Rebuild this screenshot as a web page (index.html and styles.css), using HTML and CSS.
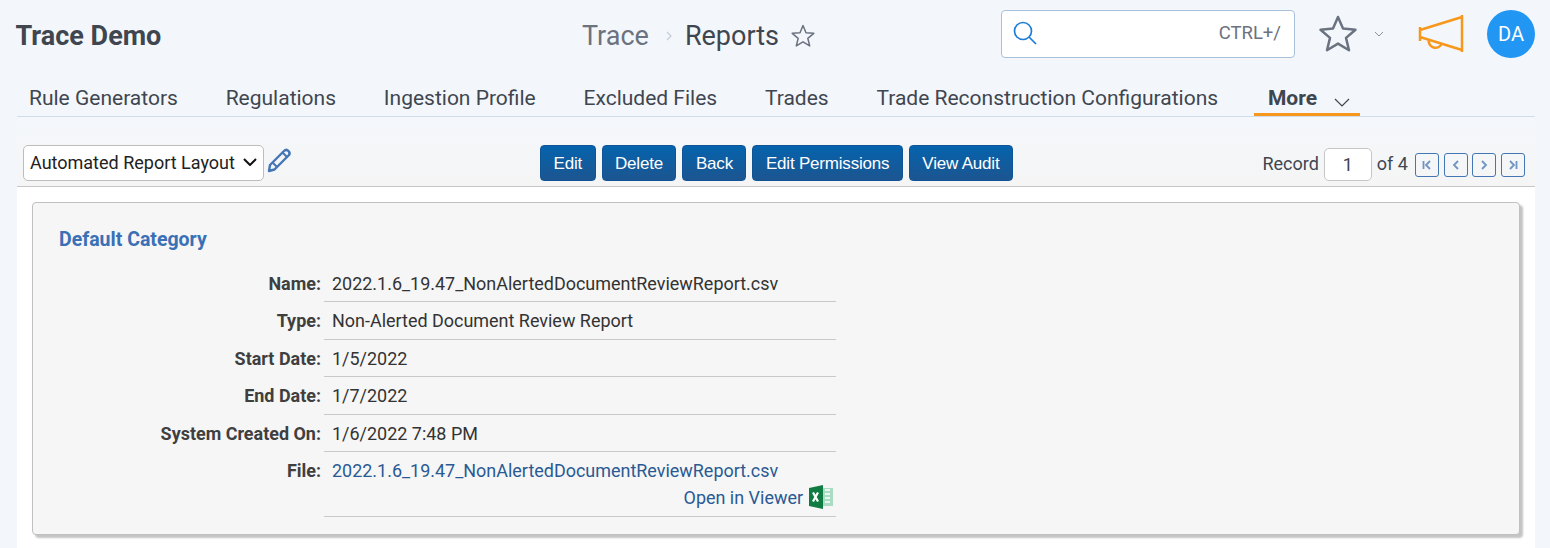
FILE: index.html
```html
<!DOCTYPE html>
<html lang="en">
<head>
    <meta charset="UTF-8">
    <title>Reports</title>
    <link rel="stylesheet" href="styles.css">
</head>
<body>

<header class="topbar">
    <div class="app-title">Trace Demo</div>
    <div class="crumbs">
        <span class="crumb-parent">Trace</span>
        <svg class="crumb-sep" width="8" height="10" viewBox="0 0 8 10"><path d="M2 1l4 4-4 4" fill="none" stroke="#c3ccd8" stroke-width="1.2"/></svg>
        <span class="crumb-current">Reports</span>
        <svg class="crumb-star" width="26" height="26" viewBox="0 0 26 26"><path d="M13 2.5l3 7.2 7.8.6-6 5 1.9 7.6-6.700-4.100-6.700 4.100 1.900-7.600-6-5 7.800-.6z" fill="none" stroke="#6b7280" stroke-width="1.500" stroke-linejoin="round"/></svg>
    </div>
    <div class="top-tools">
        <div class="search">
            <svg width="26" height="26" viewBox="0 0 26 26"><circle cx="11" cy="11" r="8.500" fill="none" stroke="#1c7ed6" stroke-width="1.700"/><path d="M17 17l7 7" stroke="#1c7ed6" stroke-width="1.700"/></svg>
            <span class="search-hint">CTRL+/</span>
        </div>
        <svg class="fav-star" width="40" height="40" viewBox="0 0 40 40"><path d="M20 3l5 11.500 12.500 1.200-9.500 8.200 3 12.300-11-6.600-11 6.600 3-12.300-9.500-8.200 12.500-1.200z" fill="none" stroke="#6b7280" stroke-width="2.500" stroke-linejoin="round"/></svg>
        <svg class="fav-caret" width="10" height="6" viewBox="0 0 10 6"><path d="M1 1l4 4 4-4" fill="none" stroke="#8a929c" stroke-width="1"/></svg>
        <svg class="horn" width="46" height="38" viewBox="0 0 46 38"><path d="M2 12v14M2 15L44 2M2 22l42 13M44 0v37" fill="none" stroke="#f7981d" stroke-width="2.500"/><path d="M11 24a6.800 6.800 0 0 0 13 4" fill="none" stroke="#f7981d" stroke-width="2.500"/></svg>
        <div class="avatar">DA</div>
    </div>
</header>

<nav class="tabs">
    <a class="tab">Rule Generators</a>
    <a class="tab">Regulations</a>
    <a class="tab">Ingestion Profile</a>
    <a class="tab">Excluded Files</a>
    <a class="tab">Trades</a>
    <a class="tab">Trade Reconstruction Configurations</a>
    <a class="tab tab-more">More
        <svg width="16" height="9" viewBox="0 0 16 9"><path d="M1 1l7 7 7-7" fill="none" stroke="#3f4650" stroke-width="1.200"/></svg>
    </a>
</nav>

<main class="panel">
    <div class="toolbar">
        <div class="layout-pick">
            <div class="select">
                <span>Automated Report Layout</span>
                <svg width="14" height="8" viewBox="0 0 14 8"><path d="M1 1l6 6 6-6" fill="none" stroke="#111" stroke-width="2"/></svg>
            </div>
            <svg class="pencil" width="26" height="26" viewBox="0 0 26 26"><path d="M3 18L17 4c1.500-1.500 3-1.500 4.500 0s1.500 3 0 4.500L7.500 22.500 2 24z" fill="none" stroke="#4476b4" stroke-width="2.400" stroke-linejoin="round"/><path d="M15.500 5.500l5 5M6 16l4 4" stroke="#4476b4" stroke-width="2"/></svg>
        </div>
        <div class="actions">
            <button class="btn">Edit</button>
            <button class="btn">Delete</button>
            <button class="btn">Back</button>
            <button class="btn">Edit Permissions</button>
            <button class="btn">View Audit</button>
        </div>
        <div class="pager">
            <span>Record</span>
            <span class="page-num">1</span>
            <span>of 4</span>
            <div class="pager-btns">
                <a class="page-btn"><svg width="12" height="10" viewBox="0 0 12 10"><path d="M2.500 1v8M9 1L5 5l4 4" fill="none" stroke="#6f95c2" stroke-width="1.800"/></svg></a>
                <a class="page-btn"><svg width="12" height="10" viewBox="0 0 12 10"><path d="M8 1L4 5l4 4" fill="none" stroke="#6f95c2" stroke-width="1.800"/></svg></a>
                <a class="page-btn"><svg width="12" height="10" viewBox="0 0 12 10"><path d="M4 1l4 4-4 4" fill="none" stroke="#6f95c2" stroke-width="1.800"/></svg></a>
                <a class="page-btn"><svg width="12" height="10" viewBox="0 0 12 10"><path d="M9.500 1v8M3 1l4 4-4 4" fill="none" stroke="#6f95c2" stroke-width="1.800"/></svg></a>
            </div>
        </div>
    </div>

    <div class="detail">
        <section class="card">
            <h2 class="card-title">Default Category</h2>
            <dl class="fields">
                <div class="field"><dt>Name:</dt><dd>2022.1.6_19.47_NonAlertedDocumentReviewReport.csv</dd></div>
                <div class="field"><dt>Type:</dt><dd>Non-Alerted Document Review Report</dd></div>
                <div class="field"><dt>Start Date:</dt><dd>1/5/2022</dd></div>
                <div class="field"><dt>End Date:</dt><dd>1/7/2022</dd></div>
                <div class="field"><dt>System Created On:</dt><dd>1/6/2022 7:48 PM</dd></div>
                <div class="field field-file">
                    <dt>File:</dt>
                    <dd>
                        <a class="file-link">2022.1.6_19.47_NonAlertedDocumentReviewReport.csv</a>
                        <div class="viewer-row">
                            <a class="file-link">Open in Viewer</a>
                            <svg width="25" height="24" viewBox="0 0 25 24"><rect x="11" y="3" width="13" height="18" fill="#a9dcc3"/><path d="M16 5h5M16 9h5M16 13h5M16 17h5" stroke="#ffffff" stroke-width="1.500"/><path d="M0 3l14-3v24L0 21z" fill="#107c41"/><path d="M4 7.500l5 9M9 7.500l-5 9" stroke="#ffffff" stroke-width="2.200"/></svg>
                        </div>
                    </dd>
                </div>
            </dl>
        </section>
    </div>
</main>

</body>
</html>
```

FILE: styles.css
```css
body {
    margin: 0;
    background-color: #f3f7fb;
    font-family: Roboto, "Liberation Sans", sans-serif;
    color: #333;
    height: 548px;
    overflow: hidden;
}
.topbar {
    display: flex;
    align-items: center;
    box-sizing: border-box;
    height: 71px;
    padding: 0 15px 3px 15.500px;
}
.app-title {
    width: 566.500px;
    margin-top: 4px;
    font-size: 27px;
    font-weight: 700;
    color: #3f4650;
    flex-shrink: 0;
}
.crumbs {
    display: flex;
    align-items: center;
    margin-top: 4px;
    font-size: 27px;
}
.crumb-parent {
    color: #6b7280;
}
.crumb-sep {
    margin: 0 12px 0 16px;
}
.crumb-current {
    color: #3f4650;
}
.crumb-star {
    margin-left: 11px;
}
.top-tools {
    display: flex;
    align-items: center;
    margin-left: auto;
}
.search {
    display: flex;
    align-items: center;
    justify-content: space-between;
    box-sizing: border-box;
    width: 294px;
    height: 48px;
    padding: 0 13px 2px 10px;
    background-color: white;
    border: 1px solid #a9c0da;
    border-radius: 4px;
}
.search-hint {
    font-size: 18.500px;
    color: #6b7280;
}
.fav-star {
    margin-left: 23px;
}
.fav-caret {
    margin-left: 16px;
}
.horn {
    margin-left: 34px;
}
.avatar {
    display: flex;
    align-items: center;
    justify-content: center;
    width: 48px;
    height: 48px;
    margin-left: 23px;
    border-radius: 50%;
    background-color: #2196f3;
    color: white;
    font-size: 20px;
}
.tabs {
    display: flex;
    gap: 23.800px;
    height: 45px;
    margin: 0 15px 0 17px;
    border-bottom: 1px solid #cfdcea;
}
.tab {
    box-sizing: border-box;
    height: 45px;
    padding: 15px 12px 0;
    font-size: 21px;
    color: #3f4650;
    white-space: nowrap;
}
.tab-more {
    display: flex;
    gap: 17px;
    padding: 15px 10px 0 14px;
    font-weight: 700;
    border-bottom: 3px solid #f7981d;
}
.tab-more svg {
    margin-top: 12px;
}
.panel {
    margin: 0 15px 0 17px;
}
.toolbar {
    display: grid;
    grid-template-columns: 517px auto 1fr;
    align-items: center;
    box-sizing: border-box;
    height: 70px;
    padding: 23px 10px 0 6px;
    background: linear-gradient(#f4f7fb, #f5f5f5);
    border-bottom: 1px solid #c6c6c6;
}
.layout-pick {
    display: flex;
    align-items: center;
}
.select {
    display: flex;
    align-items: center;
    justify-content: space-between;
    box-sizing: border-box;
    width: 241px;
    height: 36px;
    padding: 0 6px 2px 6px;
    background-color: white;
    border: 1px solid #bdbdbd;
    border-radius: 5px;
    font-size: 18px;
    color: #222;
}
.pencil {
    margin: -6px 0 0 3px;
}
.actions {
    display: flex;
    gap: 6px;
}
.btn {
    height: 36px;
    padding: 1px 12.500px 0;
    background: linear-gradient(#0563ad, #1c5590);
    color: white;
    border: 1px solid #0f5596;
    border-radius: 4px;
    font-family: "Liberation Sans", sans-serif;
    font-size: 17px;
    letter-spacing: -0.2px;
}
.pager {
    display: flex;
    align-items: center;
    justify-content: flex-end;
    gap: 5px;
    font-size: 18px;
    color: #3f4650;
}
.page-num {
    box-sizing: border-box;
    width: 48px;
    height: 33px;
    margin-top: 3px;
    line-height: 31px;
    text-align: center;
    background-color: white;
    border: 1px solid #c6c6c6;
    border-radius: 5px;
}
.pager-btns {
    display: flex;
    gap: 4.700px;
    margin: 3px 0 0 2px;
}
.page-btn {
    display: flex;
    align-items: center;
    justify-content: center;
    box-sizing: border-box;
    width: 24px;
    height: 24px;
    border: 1.500px solid #4476b4;
    border-radius: 3px;
}
.detail {
    padding: 15px 15px 0;
    height: 361px;
    box-sizing: border-box;
    background-color: white;
}
.card {
    box-sizing: border-box;
    height: 333px;
    padding: 25px 26px 0;
    background-color: #f6f6f6;
    border: 1px solid #c0c0c0;
    border-radius: 4px;
    box-shadow: 3px 3px 2px #c4c4c4;
}
.card-title {
    margin: 0 0 13.500px;
    font-size: 19.500px;
    font-weight: 700;
    color: #3a70b5;
}
.fields {
    margin: 0;
    font-size: 17.970px;
}
.field {
    display: flex;
}
.field dt {
    box-sizing: border-box;
    width: 262px;
    padding-top: 8.300px;
    text-align: right;
    font-weight: 700;
    color: #3f3f3f;
}
.field dd {
    box-sizing: border-box;
    width: 512px;
    height: 37.500px;
    margin: 0 0 0 3px;
    padding: 8.300px 8px 0;
    border-bottom: 1px solid #c9c9c9;
    color: #333;
}
.field-file dd {
    height: 65px;
}
.file-link {
    color: #2a5a94;
}
.viewer-row {
    display: flex;
    align-items: center;
    justify-content: flex-end;
    gap: 6px;
    margin: 4px -6px 0 0;
}
```
